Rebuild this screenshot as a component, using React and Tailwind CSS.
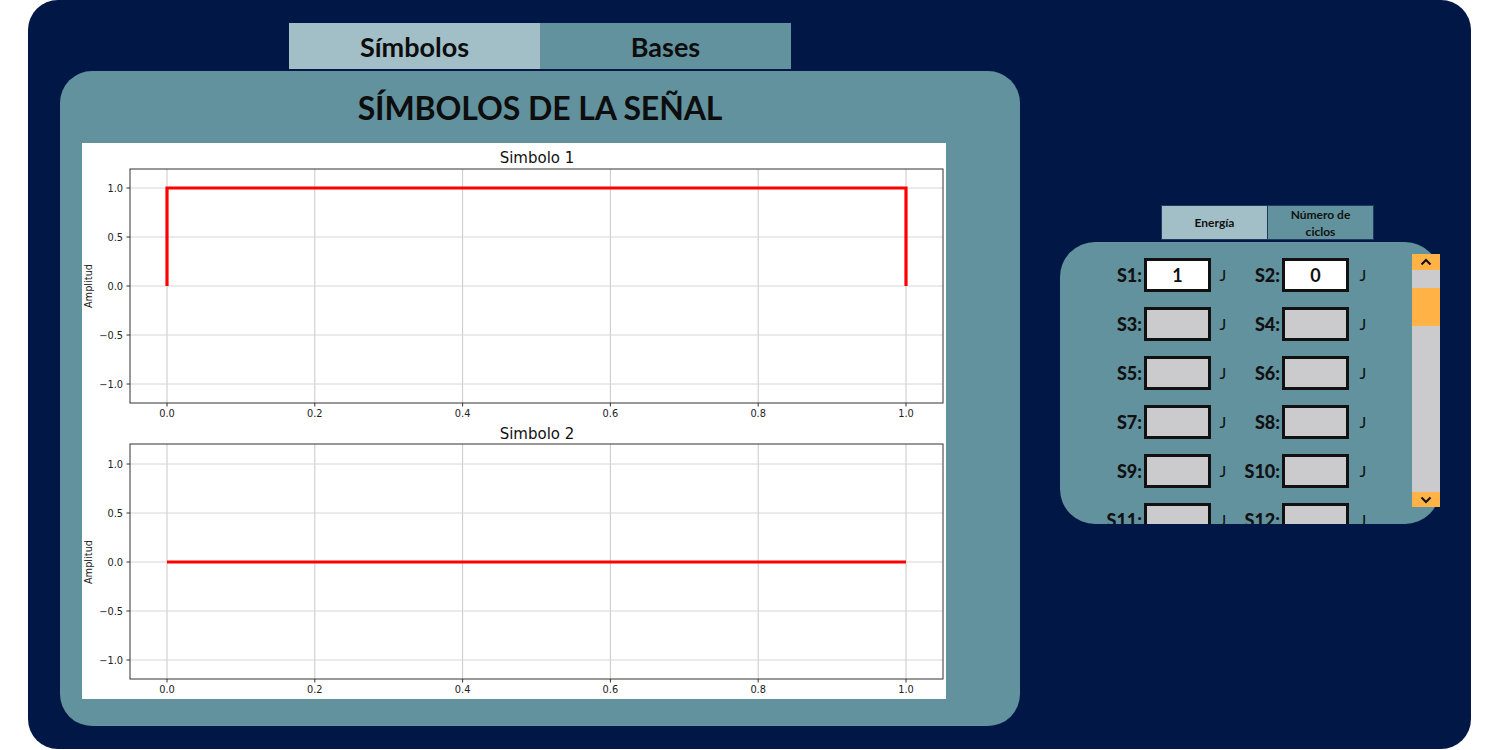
const xTicks = [0, 0.2, 0.4, 0.6, 0.8, 1.0];
const yTicks = [1, 0.5, 0, -0.5, -1];

const px = (v) => 85 + v * 739;

function Axes({ top, bottom, zero, title, titleY, tickY, line }) {
  const py = (v) => zero - v * 98;
  return (
    <g>
      <text x={455} y={titleY} textAnchor="middle" fontSize="15" fill="#111">
        {title}
      </text>
      {xTicks.map((t) => (
        <line key={"gx" + t} x1={px(t)} x2={px(t)} y1={top} y2={bottom} stroke="#c8c8c8" strokeWidth="1" />
      ))}
      {yTicks.map((t) => (
        <line key={"gy" + t} x1={48} x2={861} y1={py(t)} y2={py(t)} stroke="#d6d6d6" strokeWidth="1" />
      ))}
      <path d={line(py)} fill="none" stroke="#ff0000" strokeWidth="3.2" strokeLinejoin="miter" />
      <rect x={48} y={top} width={813} height={bottom - top} fill="none" stroke="#333" strokeWidth="1" />
      {xTicks.map((t) => (
        <g key={"tx" + t}>
          <line x1={px(t)} x2={px(t)} y1={bottom} y2={bottom + 3.5} stroke="#333" strokeWidth="1" />
          <text x={px(t)} y={tickY} textAnchor="middle" fontSize="9.8" fill="#222">
            {t.toFixed(1)}
          </text>
        </g>
      ))}
      {yTicks.map((t) => (
        <g key={"ty" + t}>
          <line x1={44.5} x2={48} y1={py(t)} y2={py(t)} stroke="#333" strokeWidth="1" />
          <text x={41} y={py(t) + 3.5} textAnchor="end" fontSize="9.8" fill="#222">
            {(t < 0 ? "\u2212" : "") + Math.abs(t).toFixed(1)}
          </text>
        </g>
      ))}
      <text
        x={10}
        y={zero}
        transform={`rotate(-90 10 ${zero})`}
        textAnchor="middle"
        fontSize="9.8"
        fill="#222"
      >
        Amplitud
      </text>
    </g>
  );
}

function Chart() {
  return (
    <svg width="864" height="556" viewBox="0 0 864 556" style={{ fontFamily: "'DejaVu Sans', sans-serif" }}>
      <rect width="864" height="556" fill="#fff" />
      <Axes
        top={26}
        bottom={260}
        zero={143}
        title="Simbolo 1"
        titleY={20}
        tickY={274}
        line={(py) => `M${px(0)} ${py(0)} L${px(0)} ${py(1)} L${px(1)} ${py(1)} L${px(1)} ${py(0)}`}
      />
      <Axes
        top={301}
        bottom={536}
        zero={419}
        title="Simbolo 2"
        titleY={296}
        tickY={550}
        line={(py) => `M${px(0)} ${py(0)} L${px(1)} ${py(0)}`}
      />
    </svg>
  );
}

const rows = [
  ["S1", "1", "S2", "0"],
  ["S3", "", "S4", ""],
  ["S5", "", "S6", ""],
  ["S7", "", "S8", ""],
  ["S9", "", "S10", ""],
  ["S11", "", "S12", ""],
];

function Cell({ label, value, lw, jw }) {
  return (
    <div className="flex items-center">
      <div className={`${lw} text-right text-[18px] font-black text-[#111] whitespace-nowrap leading-none`}>
        {label}:
      </div>
      <div
        className={`ml-[2px] w-[67px] h-[34px] border-[3px] border-[#111] flex items-center justify-center text-[18px] font-bold text-[#111] ${
          value !== "" ? "bg-white" : "bg-[#cbcbcd]"
        }`}
      >
        {value}
      </div>
      <div className={`${jw} text-center text-[16px] text-[#111]`}>J</div>
    </div>
  );
}

function Chevron({ up }) {
  return (
    <svg width="12" height="8" viewBox="0 0 12 8">
      <polyline
        points={up ? "1.5,6.5 6,2 10.5,6.5" : "1.5,1.5 6,6 10.5,1.5"}
        fill="none"
        stroke="#111"
        strokeWidth="2"
      />
    </svg>
  );
}

export default function App() {
  return (
    <div className="w-[1500px] h-[750px] bg-white" style={{ fontFamily: "Lato, 'Noto Sans', sans-serif" }}>
      <div className="ml-[28px] w-[1443px] h-[749px] rounded-[30px] bg-[#011847] flex">
        {/* left */}
        <div className="pt-[23px] pl-[32px]">
          <div className="flex ml-[229px] h-[46px]">
            <div className="w-[251px] pt-[3px] bg-[#a2bfc8] flex items-center justify-center text-[27px] font-bold text-[#0d0d0d]">
              Símbolos
            </div>
            <div className="w-[251px] pt-[3px] bg-[#62929e] flex items-center justify-center text-[27px] font-bold text-[#0d0d0d]">
              Bases
            </div>
          </div>
          <div className="mt-[2px] w-[960px] h-[655px] rounded-[32px] bg-[#62929e] flex flex-col items-center">
            <div className="h-[72px] pt-[2px] flex items-center text-[32px] font-bold tracking-[-0.1px] text-[#0d0d0d]">
              SÍMBOLOS DE LA SEÑAL
            </div>
            <div className="self-start ml-[22px]">
              <Chart />
            </div>
          </div>
        </div>

        {/* right */}
        <div className="ml-[40px] pt-[205px]">
          <div className="flex w-fit ml-[101px] h-[35px] border border-[#1f3a60]">
            <div className="w-[105px] bg-[#a2bfc8] flex items-center justify-center text-[12px] font-bold text-[#111]">
              Energía
            </div>
            <div className="w-[106px] bg-[#62929e] border-l border-[#1f3a60] flex items-center justify-center text-center text-[12px] leading-[17px] font-bold text-[#111]">
              Número de
              <br />
              ciclos
            </div>
          </div>
          <div className="mt-[2px] w-[380px] h-[282px] rounded-[35px] bg-[#62929e] flex">
            <div className="flex-1 h-[282px] overflow-hidden rounded-bl-[35px] pt-[16px] pl-[45px] flex flex-col gap-[15px]">
              {rows.map((r) => (
                <div key={r[0]} className="flex h-[34px] shrink-0">
                  <Cell label={r[0]} value={r[1]} lw="w-[37px]" jw="w-[24px]" />
                  <Cell label={r[2]} value={r[3]} lw="w-[45px]" jw="w-[28px]" />
                </div>
              ))}
            </div>
            <div className="mt-[12px] w-[28px] h-[253px] flex flex-col self-start">
              <div className="h-[16px] bg-[#ffb347] flex items-center justify-center">
                <Chevron up />
              </div>
              <div className="flex-1 bg-[#cbcbcd]">
                <div className="mt-[18px] h-[38px] bg-[#ffb347]" />
              </div>
              <div className="h-[15px] bg-[#ffb347] flex items-center justify-center">
                <Chevron />
              </div>
            </div>
          </div>
        </div>
      </div>
    </div>
  );
}
